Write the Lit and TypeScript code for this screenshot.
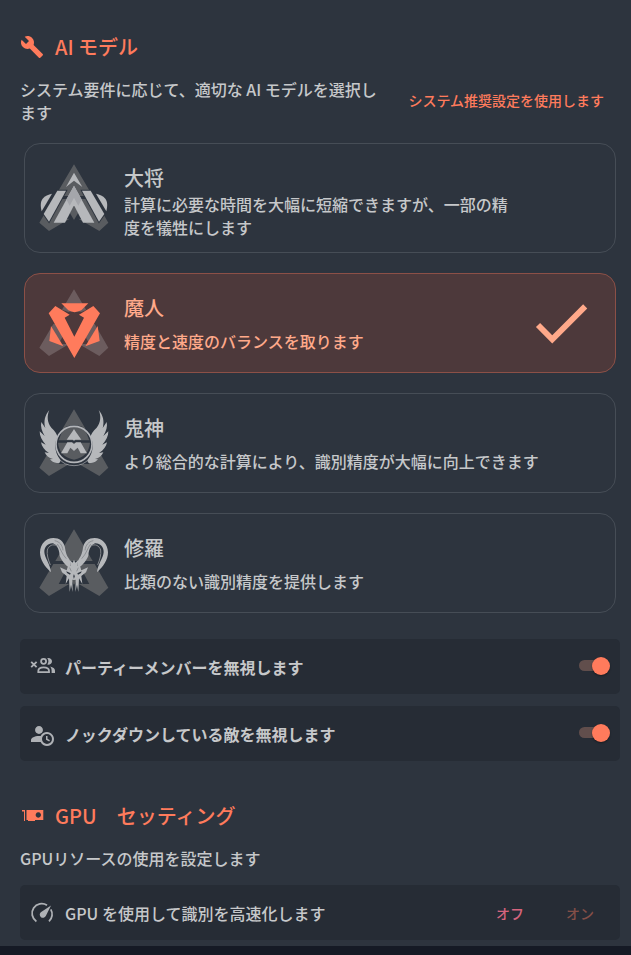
import { LitElement, html, css, svg, nothing } from "lit";
import { customElement, state } from "lit/decorators.js";

// Shared backdrop of every rank emblem
const peak = svg`
  <path class="peak" fill-rule="evenodd" d="M162 58L218 153H106Z
    M100 162H148L116 222H142L149 221L87 258L58 233Z
    M224 162H176L208 222H182L175 221L238 258L265 233Z
    M148 162H176L187 182L162 225L137 182Z"/>`;

const mirrored = (part: unknown) => svg`${part}<g transform="matrix(-1 0 0 1 324 0)">${part}</g>`;

const general = svg`
  <path d="M162 83L187 126L162 107L138 126Z"/>
  ${mirrored(svg`
    <path class="edged" d="M112 137H138L87 230L71 207Z"/>
    <path class="edged" d="M96 146L65 199C61 183 61 170 68 161C75 152 85 148 96 146Z"/>
    <path d="M162 122V181L135 233H101Z"/>
  `)}
  <path class="soft" d="M162 122L185 163L175 182L162 158L149 182L139 163Z"/>`;

const demon = svg`
  <path class="cut" d="M163 122L184 126L204 118L196 150L163 214L130 150L122 118L145 126Z"/>
  <path d="M124 100H205L184 121Q163 132 145 121Z"/>
  <path d="M106 108L86 130L163 264L240 130L220 108L177 134L192 143L163 200L134 143L149 134Z"/>
  <path d="M93 168L88 213L130 229Z"/>
  <path d="M233 168L239 213L196 229Z"/>`;

const ogre = svg`
  <circle class="cut" cx="162" cy="165" r="60"/>
  <path class="peak" d="M132 110H192L208 151H116Z"/>
  <path class="peak" d="M114 158H210Q206 200 162 209Q118 200 114 158Z"/>
  <circle class="ring" cx="162" cy="163" r="54"/>
  <circle class="hairline" cx="162" cy="167" r="60"/>
  ${mirrored(svg`
    <path d="M88 60C80 78 82 99 94 113C105 123 112 133 112 141C102 159 104 186 119 207C124 213 120 221 111 219C101 218 94 214 90 208L99 207C86 204 78 197 74 187L87 189C73 181 65 169 63 157L77 164C65 151 59 138 59 124L74 138C65 123 61 109 64 96L76 114C70 94 75 75 88 60Z"/>
    <path d="M162.500 117L140 149H158L162.500 152Z"/>
    <path d="M142 157H156L162.500 163V183L151 173L142 190H123Z"/>
  `)}`;

const asura = svg`
  ${mirrored(svg`
    <path d="M91 185C74 169 60 150 60 127C61 101 78 84 100 84C119 84 130 94 134 109C137 122 137 133 146 145C153 155 153 166 149 173C137 167 124 151 119 137C118 124 114 106 99 100C84 99 73 110 73 126C74 145 90 160 93 185Z"/>
    <path class="wisp" d="M112 108C99 100 86 107 82 120C80 133 84 148 91 165"/>
    <path class="groove" d="M112 102C121 113 125 132 139 146M104 92C119 95 127 105 129 121"/>
    <path d="M120 172L140 181L145 164L152 168L149 150L158 158L162.500 149V210L157 209L158 246L153 224L149 246L147 205L137 222L140 198L126 187Z"/>
    <path class="cut" d="M139 184L152 190L150 194L141 189ZM159.500 199L162.500 192V207Z"/>
    <path class="groove" d="M149 173L154 184"/>
  `)}`;

interface Model { id: string; name: string; note: string; art: unknown }

const models: Model[] = [
  { id: "general", name: "大将", note: "計算に必要な時間を大幅に短縮できますが、一部の精度を犠牲にします", art: general },
  { id: "demon", name: "魔人", note: "精度と速度のバランスを取ります", art: demon },
  { id: "ogre", name: "鬼神", note: "より総合的な計算により、識別精度が大幅に向上できます", art: ogre },
  { id: "asura", name: "修羅", note: "比類のない識別精度を提供します", art: asura },
];

const wrench = svg`<path d="M22.7 19l-9.1-9.1c.9-2.3.4-5-1.5-6.9-2-2-5-2.4-7.4-1.3L9 6 6 9 1.6 4.7C.4 7.1.9 10.1 2.9 12.1c1.9 1.9 4.6 2.4 6.9 1.5l9.1 9.1c.4.4 1 .4 1.4 0l2.3-2.3c.5-.4.5-1.1.1-1.4z"/>`;
const card = svg`<path fill-rule="evenodd" d="M2 6H5V17H4V7.5H2ZM6.500 6H23.300V16H15V17H8V16H6.500ZM18.300 8.300a2.700 2.700 0 1 0 .01 0Z"/>`;
const party = svg`
  <path class="stroke" d="M1.200 6.800L6.600 12.200M6.600 6.800L1.200 12.200"/>
  <circle class="stroke" cx="13.600" cy="6.300" r="2.500"/>
  <path class="stroke" d="M8.300 17.200V16C8.300 13.400 11 12.400 13.600 12.400S19 13.400 19 16V17.200Z"/>
  <path d="M17.200 3C20 2.500 22 4 22 6.300S20 10 17.200 9.600C18.800 7.800 18.800 4.800 17.200 3ZM20 11.600C23.200 12.300 25 13.600 25 15.800V18H21.600V15.800C21.600 14 21 12.600 20 11.600Z"/>`;
const knocked = svg`<path d="M10.63,14.1C12.23,10.58 16.38,9.03 19.9,10.63C23.42,12.23 24.97,16.38 23.37,19.9C22.24,22.4 19.75,24 17,24C14.3,24 11.83,22.44 10.67,20H1V18C1.06,16.86 1.84,15.93 3.34,15.18C4.84,14.43 6.72,14.04 9,14C9.57,14 10.11,14.05 10.63,14.1M9,4C10.12,4.03 11.06,4.42 11.81,5.17C12.56,5.92 12.93,6.86 12.93,8C12.93,9.14 12.56,10.08 11.81,10.83C11.06,11.58 10.12,11.95 9,11.95C7.88,11.95 6.94,11.58 6.19,10.83C5.44,10.08 5.07,9.14 5.07,8C5.07,6.86 5.44,5.92 6.19,5.17C6.94,4.42 7.88,4.03 9,4M17,22A5,5 0 0,0 22,17A5,5 0 0,0 17,12A5,5 0 0,0 12,17A5,5 0 0,0 17,22M16,14H17.5V16.82L19.94,18.23L19.19,19.53L16,17.69V14Z"/>`;
const gauge = svg`
  <path class="stroke" d="M6.400 20.400A9.600 9.600 0 0 1 17 4.300M20.800 8.400A9.600 9.600 0 0 1 19 20.400"/>
  <path d="M21 4.500L15.800 15A3.200 3.200 0 1 1 10.800 11.200Z"/>`;

const icon = (shape: unknown) => html`<svg class="icon" viewBox="0 0 24 24" aria-hidden="true">${shape}</svg>`;

@customElement("app-root")
export class AppRoot extends LitElement {
  @state() private model = "demon";
  @state() private gpu = false;

  static styles = css`
    :host {
      display: block;
      min-height: 100vh;
      background: #151a25;
      color: #c6c8ca;
      font: 500 16px/23px "Noto Sans CJK JP", sans-serif;
    }
    .panel { background: #2d343e; padding: 32px 11px 6px 20px; }
    h2 {
      display: flex;
      align-items: center;
      gap: 11px;
      margin: 0 0 16px;
      color: #ff7b5c;
      font-size: 20px;
      font-weight: 500;
      line-height: 30px;
      white-space: pre;
    }
    p { margin: 0; }
    .icon { flex: none; width: 24px; height: 24px; fill: currentColor; overflow: visible; }
    .stroke { fill: none; stroke: currentColor; stroke-width: 1.8; }
    button { border: 0; background: none; font: inherit; font-size: 14px; cursor: pointer; }
    .intro { display: flex; align-items: center; justify-content: space-between; }
    .recommend { flex: none; padding: 0 16px 2px; color: #ff7b5c; }
    .models {
      display: grid;
      grid-template-columns: minmax(0, 1fr);
      gap: 20px;
      margin: 19px 4px 26px;
      padding: 0;
      border: 0;
      min-width: 0;
    }
    .model {
      position: relative;
      display: flex;
      align-items: center;
      gap: 15px;
      padding: 14px 19px 14px 14px;
      border: 1px solid #464d56;
      border-radius: 16px;
      cursor: pointer;
    }
    .model input { position: absolute; opacity: 0; margin: 0; }
    .emblem { flex: none; width: 70px; height: 70px; fill: #b6b8bb; color: #2d343e; }
    .peak { fill: #595c60; }
    .soft { fill: #a4a6ab; }
    .cut { fill: currentColor; }
    .edged { stroke: currentColor; stroke-width: 6; paint-order: stroke; }
    .ring { fill: none; stroke: #b3b5b9; stroke-width: 5; }
    .hairline { fill: none; stroke: #b3b5b9; stroke-width: 2; stroke-dasharray: 105 400; stroke-dashoffset: -42; }
    .wisp { fill: none; stroke: #85888d; stroke-width: 3; }
    .groove { fill: none; stroke: #787b80; stroke-width: 2; }
    .text {
      display: flex;
      flex-direction: column;
      justify-content: space-between;
      align-self: flex-start;
      box-sizing: border-box;
      flex: 0 1 416px;
      min-height: 65px;
      padding-top: 5px;
      margin-bottom: -1px;
    }
    .note { max-width: 392px; }
    .note.wide { max-width: none; }
    .name { font-size: 20px; line-height: 30px; }
    .tick { flex: none; width: 70px; height: 70px; margin-left: auto; fill: currentColor; }
    .chosen { background: #4d393b; border-color: #8c5047; color: #ffa98a; }
    .chosen .emblem { fill: #ff7b5c; color: #4d393b; }
    .chosen .peak { fill: #6c5c5e; }
    .rows { display: grid; gap: 12px; }
    .row {
      display: flex;
      align-items: center;
      gap: 11px;
      min-height: 55px;
      padding: 0 10px;
      border-radius: 5px;
      background: #262c35;
    }
    .row .icon { color: #aeb1b5; }
    .row label, .row .label { flex: 1; padding-top: 2px; }
    .strong { font-weight: 700; }
    .switch {
      appearance: none;
      display: flex;
      align-items: center;
      width: 31px;
      height: 18px;
      margin: 0 0 2px;
      cursor: pointer;
    }
    .switch::before { content: ""; width: 27px; height: 11px; border-radius: 6px; background: #464b53; }
    .switch::after {
      content: "";
      width: 18px;
      height: 18px;
      margin-left: -27px;
      border-radius: 50%;
      background: #aeb1b5;
      box-shadow: 0 1px 2px #0006;
    }
    .switch:checked::before { background: #614e4c; }
    .switch:checked::after { margin-left: -14px; background: #ff7b5c; }
    .gpu-title { margin-top: 40px; }
    .gpu-row { margin-top: 15px; padding-right: 5px; }
    .pair { display: flex; padding-top: 2px; }
    .pair button { width: 70px; padding: 0; color: #844f48; }
    .pair .on { color: #d5647d; }
  `;

  private card(m: Model) {
    const chosen = m.id === this.model;
    return html`
      <label class="model ${chosen ? "chosen" : ""}">
        <input type="radio" name="model" .checked=${chosen} @change=${() => (this.model = m.id)} />
        <svg class="emblem" viewBox="57 54 210 210" aria-hidden="true">${peak}${m.art}</svg>
        <span class="text">
          <span class="name">${m.name}</span>
          <span class="note ${m.id === "general" ? "" : "wide"}">${m.note}</span>
        </span>
        ${chosen
          ? html`<svg class="tick" viewBox="0 0 24 24" aria-hidden="true"><path d="M9 16.17L4.83 12l-1.42 1.41L9 19 21 7l-1.41-1.41z" /></svg>`
          : nothing}
      </label>`;
  }

  render() {
    return html`
      <main class="panel">
        <h2>${icon(wrench)}<span>AI モデル</span></h2>
        <div class="intro">
          <p>システム要件に応じて、適切な AI モデルを選択します</p>
          <button class="recommend" @click=${() => (this.model = "demon")}>システム推奨設定を使用します</button>
        </div>
        <fieldset class="models" aria-label="AI モデル">${models.map((m) => this.card(m))}</fieldset>
        <div class="rows">
          <div class="row">
            ${icon(party)}
            <label class="strong" for="party">パーティーメンバーを無視します</label>
            <input class="switch" id="party" type="checkbox" role="switch" checked />
          </div>
          <div class="row">
            ${icon(knocked)}
            <label class="strong" for="knocked">ノックダウンしている敵を無視します</label>
            <input class="switch" id="knocked" type="checkbox" role="switch" checked />
          </div>
        </div>
        <h2 class="gpu-title">${icon(card)}<span>GPU　セッティング</span></h2>
        <p>GPUリソースの使用を設定します</p>
        <div class="row gpu-row">
          ${icon(gauge)}
          <span class="label" id="gpu">GPU を使用して識別を高速化します</span>
          <div class="pair" role="group" aria-labelledby="gpu">
            <button class=${this.gpu ? "" : "on"} @click=${() => (this.gpu = false)}>オフ</button>
            <button class=${this.gpu ? "on" : ""} @click=${() => (this.gpu = true)}>オン</button>
          </div>
        </div>
      </main>`;
  }
}
